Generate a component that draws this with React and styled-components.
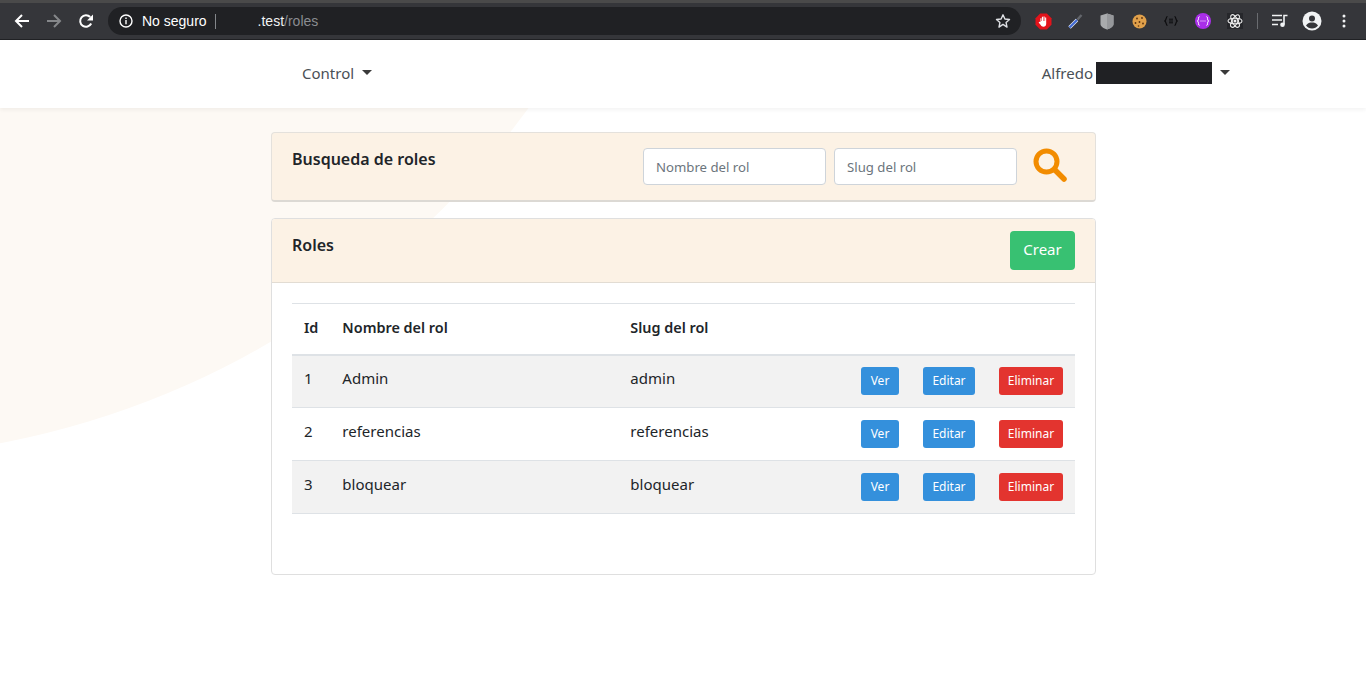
import React from "react";
import styled, { createGlobalStyle } from "styled-components";

const Global = createGlobalStyle`
  html, body { margin: 0; padding: 0; background: #fff; }
  body { font-family: "Noto Sans", "Open Sans", sans-serif; color: #212529; overflow: hidden; }
  * { box-sizing: border-box; }
`;

const roles = [
  { id: 1, name: "Admin", slug: "admin" },
  { id: 2, name: "referencias", slug: "referencias" },
  { id: 3, name: "bloquear", slug: "bloquear" },
];

function BackIcon({ color }) {
  return (
    <svg width="16" height="16" viewBox="0 0 16 16">
      <path d="M15 8H2M8 2L2 8l6 6" fill="none" stroke={color} strokeWidth="2" />
    </svg>
  );
}

function ForwardIcon({ color }) {
  return (
    <svg width="16" height="16" viewBox="0 0 16 16">
      <path d="M1 8h13M8 2l6 6-6 6" fill="none" stroke={color} strokeWidth="2" />
    </svg>
  );
}

function ReloadIcon() {
  return (
    <svg width="16" height="16" viewBox="0 0 16 16">
      <path d="M13.2 10.5A5.8 5.8 0 1 1 12.2 4" fill="none" stroke="#fff" strokeWidth="2" />
      <path d="M15 1.5V7.5H9z" fill="#fff" />
    </svg>
  );
}

function InfoIcon() {
  return (
    <svg width="14" height="14" viewBox="0 0 14 14">
      <circle cx="7" cy="7" r="6" fill="none" stroke="#fff" strokeWidth="1.4" />
      <path d="M6.3 6h1.4v4.3H6.3zM6.3 3.5h1.4v1.4H6.3z" fill="#fff" />
    </svg>
  );
}

function StarIcon() {
  return (
    <svg width="16" height="16" viewBox="0 0 16 16">
      <path d="M8 1.8l1.900 4.200 4.600.5-3.400 3.100.9 4.500L8 11.400l-4 2.700.9-4.500L1.500 6.500l4.600-.5z" fill="none" stroke="#dfe1e5" strokeWidth="1.4" strokeLinejoin="round" />
    </svg>
  );
}

function StopIcon() {
  return (
    <svg width="17" height="17" viewBox="0 0 17 17">
      <path d="M5.200.5h6.600l4.700 4.700v6.600l-4.700 4.700H5.200L.5 11.800V5.200z" fill="#e3131b" />
      <path d="M5.400 9V5.200h1V8h.5V3.700h1.100V8h.5V3.400h1.100V8h.5V4.500h1.100v6.300c0 1.800-1.100 2.900-2.800 2.900-1.300 0-2.100-.6-2.700-1.700L3.600 9.400l.9-.6z" fill="#fff" />
    </svg>
  );
}

function PipetteIcon() {
  return (
    <svg width="16" height="18" viewBox="0 0 16 18">
      <path d="M2.500 15.500L10 8" stroke="#e8ecf5" strokeWidth="3.400" />
      <path d="M2.500 15.500L10 8" stroke="#3f68d2" strokeWidth="2.200" />
      <path d="M10.500 7.500L14.500 3" stroke="#63666b" strokeWidth="2.400" />
    </svg>
  );
}

function ShieldIcon() {
  return (
    <svg width="14" height="17" viewBox="0 0 14 17">
      <path d="M7 .5L13.500 2.500V11c0 2.500-3 4.600-6.500 5.500C3.500 15.600.5 13.500.5 11V2.500z" fill="#a9abad" />
      <path d="M7 .5L13.500 2.500V11c0 2.500-3 4.600-6.500 5.500z" fill="#96989b" />
    </svg>
  );
}

function CookieIcon() {
  return (
    <svg width="15" height="15" viewBox="0 0 15 15">
      <circle cx="7.500" cy="7.500" r="7" fill="#e0a04a" />
      <circle cx="5" cy="4.500" r=".9" fill="#5a3210" />
      <circle cx="10" cy="4" r=".9" fill="#5a3210" />
      <circle cx="7.500" cy="8" r=".9" fill="#5a3210" />
      <circle cx="3.500" cy="9" r=".9" fill="#5a3210" />
      <circle cx="11" cy="9.500" r=".9" fill="#5a3210" />
      <circle cx="6.500" cy="12" r=".8" fill="#5a3210" />
    </svg>
  );
}

function VariableIcon() {
  return (
    <svg width="14" height="10" viewBox="0 0 14 10">
      <path d="M3.500.5C2 .5 2.500 4 .8 5c1.700 1 1.200 4.500 2.700 4.500M10.500.5C12 .5 11.500 4 13.200 5c-1.700 1-1.200 4.500-2.700 4.500" fill="none" stroke="#0c0c0e" strokeWidth="1.200" />
      <path d="M5 3.200h4M5 5h4M5 6.800h4" stroke="#0c0c0e" strokeWidth="1" />
    </svg>
  );
}

function PurpleIcon() {
  return (
    <svg width="16" height="16" viewBox="0 0 16 16">
      <circle cx="8" cy="8" r="8" fill="#a92ee8" />
      <path d="M4.500 3.500C3 3.500 4 7 2.500 8 4 9 3 12.500 4.500 12.500M11.500 3.500c1.500 0 .5 3.500 2 4.500-1.500 1-.5 4.500-2 4.500" fill="none" stroke="#fff" strokeWidth="1" />
      <path d="M5.500 8h1M7.500 8h1M9.500 8h1" stroke="#fff" strokeWidth="1" />
    </svg>
  );
}

function AtomIcon() {
  return (
    <svg width="16" height="16" viewBox="0 0 16 16">
      <rect width="16" height="16" fill="#26272b" />
      <circle cx="8" cy="8" r="1.500" fill="#ececec" />
      <g fill="none" stroke="#ececec" strokeWidth="1.100">
        <ellipse cx="8" cy="8" rx="7" ry="2.800" />
        <ellipse cx="8" cy="8" rx="7" ry="2.800" transform="rotate(60 8 8)" />
        <ellipse cx="8" cy="8" rx="7" ry="2.800" transform="rotate(120 8 8)" />
      </g>
    </svg>
  );
}

function QueueIcon() {
  return (
    <svg width="16" height="14" viewBox="0 0 16 14">
      <path d="M0 1.500h10M0 6h10M0 10.500h6" stroke="#f1f3f4" strokeWidth="1.600" />
      <path d="M12 10.500V1.500h3.500" fill="none" stroke="#f1f3f4" strokeWidth="1.600" />
      <circle cx="10.500" cy="10.800" r="2.300" fill="#f1f3f4" />
    </svg>
  );
}

function AccountIcon() {
  return (
    <svg width="20" height="20" viewBox="0 0 20 20">
      <circle cx="10" cy="10" r="9.500" fill="#f1f3f4" />
      <circle cx="10" cy="7.500" r="3" fill="#35363a" />
      <path d="M4 14.500c1.500-2.500 4-3 6-3s4.500.5 6 3c-1.500 2-3.500 3-6 3s-4.500-1-6-3z" fill="#35363a" />
    </svg>
  );
}

function MoreIcon() {
  return (
    <svg width="4" height="14" viewBox="0 0 4 14">
      <circle cx="2" cy="2" r="1.500" fill="#f1f3f4" />
      <circle cx="2" cy="7" r="1.500" fill="#f1f3f4" />
      <circle cx="2" cy="12" r="1.500" fill="#f1f3f4" />
    </svg>
  );
}

function SearchIcon() {
  return (
    <svg width="34" height="34" viewBox="0 0 34 34">
      <circle cx="13.500" cy="13.500" r="10.500" fill="none" stroke="#f28c00" strokeWidth="5" />
      <path d="M22 22l9 9" stroke="#f28c00" strokeWidth="5.500" strokeLinecap="round" />
    </svg>
  );
}

export default function App() {
  return (
    <Page>
      <Global />
      <Chrome>
        <NavButtons>
          <BackIcon color="#fff" />
          <ForwardIcon color="#85878a" />
          <ReloadIcon />
        </NavButtons>
        <Omnibox>
          <InfoIcon />
          <Insecure>No seguro</Insecure>
          <Divider />
          <Url>
            .test<span>/roles</span>
          </Url>
          <StarSlot>
            <StarIcon />
          </StarSlot>
        </Omnibox>
        <Extensions>
          <StopIcon />
          <PipetteIcon />
          <ShieldIcon />
          <CookieIcon />
          <VariableIcon />
          <PurpleIcon />
          <AtomIcon />
        </Extensions>
        <ChromeSep />
        <ChromeRight>
          <QueueIcon />
          <AccountIcon />
          <MoreIcon />
        </ChromeRight>
      </Chrome>
      <Viewport>
        <Blob />
        <Navbar>
          <NavLink>
            Control <Caret />
          </NavLink>
          <UserLink>
            Alfredo <Redacted /> <Caret />
          </UserLink>
        </Navbar>
        <Main>
          <SearchCard>
            <CardTitle>Busqueda de roles</CardTitle>
            <SearchForm>
              <Field placeholder="Nombre del rol" />
              <Field placeholder="Slug del rol" />
              <SearchButton aria-label="Buscar">
                <SearchIcon />
              </SearchButton>
            </SearchForm>
          </SearchCard>
          <Card>
            <CardHeader>
              <CardTitle>Roles</CardTitle>
              <CreateButton>Crear</CreateButton>
            </CardHeader>
            <CardBody>
              <Table>
                <thead>
                  <tr>
                    <Th $w="38px">Id</Th>
                    <Th $w="288px">Nombre del rol</Th>
                    <Th $w="190px">Slug del rol</Th>
                    <Th />
                  </tr>
                </thead>
                <tbody>
                  {roles.map((role) => (
                    <Row key={role.id}>
                      <Td>{role.id}</Td>
                      <Td>{role.name}</Td>
                      <Td>{role.slug}</Td>
                      <ActionsCell>
                        <Actions>
                          <ActionButton $bg="#3490dc" $w="38px">Ver</ActionButton>
                          <ActionButton $bg="#3490dc" $w="52px">Editar</ActionButton>
                          <ActionButton $bg="#e3342f" $w="64px">Eliminar</ActionButton>
                        </Actions>
                      </ActionsCell>
                    </Row>
                  ))}
                </tbody>
              </Table>
            </CardBody>
          </Card>
        </Main>
      </Viewport>
    </Page>
  );
}

const Page = styled.div`
  height: 697px;
  overflow: hidden;
  display: flex;
  flex-direction: column;
`;

const Chrome = styled.div`
  height: 40px;
  flex: none;
  background: #35363a;
  border-top: 3px solid #4a4a4a;
  border-bottom: 1px solid #202124;
  display: flex;
  align-items: center;
  padding: 0 6px 0 14px;
`;

const NavButtons = styled.div`
  display: flex;
  align-items: center;
  gap: 16px;
  margin-right: 14px;
`;

const Omnibox = styled.div`
  width: 913px;
  height: 28px;
  background: #202124;
  border-radius: 14px;
  display: flex;
  align-items: center;
  padding: 0 10px 0 11px;
  font-family: "Liberation Sans", Arial, sans-serif;
  font-size: 14px;
`;

const Insecure = styled.span`
  color: #fff;
  margin-left: 9px;
`;

const Divider = styled.span`
  width: 1px;
  height: 15px;
  background: #84878b;
  margin-left: 8px;
`;

const Url = styled.span`
  margin-left: 42px;
  color: #f1f3f4;
  span { color: #8a8d91; }
`;

const StarSlot = styled.span`
  margin-left: auto;
  display: flex;
`;

const Extensions = styled.div`
  display: grid;
  grid-template-columns: repeat(7, 32px);
  place-items: center;
  margin-left: 6px;
`;

const ChromeSep = styled.span`
  width: 1px;
  height: 16px;
  background: #6a6c70;
  margin-left: 6px;
`;

const ChromeRight = styled.div`
  display: grid;
  grid-template-columns: repeat(3, 32px);
  place-items: center;
  margin-left: 6px;
`;

const Viewport = styled.div`
  position: relative;
  flex: 1;
  background: #fff;
  overflow: hidden;
`;

const Blob = styled.div`
  position: absolute;
  width: 1695px;
  height: 1695px;
  left: -1005px;
  top: -1277px;
  border-radius: 50%;
  background: #fdf9f4;
`;

const Navbar = styled.nav`
  position: relative;
  height: 68px;
  background: #fff;
  box-shadow: 0 2px 4px rgba(0, 0, 0, 0.05);
  display: flex;
  align-items: center;
  justify-content: space-between;
  padding: 0 136px 2px 302px;
  font-size: 15px;
  color: #4a5056;
`;

const NavLink = styled.span`
  display: flex;
  align-items: center;
  gap: 8px;
`;

const UserLink = styled.span`
  display: flex;
  align-items: center;
  gap: 3px;
`;

const Redacted = styled.span`
  width: 116px;
  height: 22px;
  background: #202124;
  margin-right: 5px;
`;

const Caret = styled.span`
  display: inline-block;
  border-top: 5px solid #3a3a3a;
  border-left: 5px solid transparent;
  border-right: 5px solid transparent;
  margin-top: -2px;
`;

const Main = styled.main`
  position: relative;
  width: 825px;
  margin: 24px 0 0 271px;
  display: flex;
  flex-direction: column;
  gap: 16px;
`;

const SearchCard = styled.section`
  height: 70px;
  background: #fcf2e5;
  border: 1px solid #e4e1dc;
  border-bottom: 2px solid #dcd9d4;
  border-radius: 4px;
  display: flex;
  justify-content: space-between;
  padding: 15px 20px;
`;

const CardTitle = styled.h2`
  margin: 0;
  font-size: 16px;
  font-weight: 600;
  line-height: 22px;
  color: #212529;
`;

const SearchForm = styled.div`
  display: flex;
  align-items: flex-start;
  gap: 8px;
`;

const Field = styled.input`
  width: 183px;
  height: 37px;
  border: 1px solid #ced4da;
  border-radius: 4px;
  background: #fff;
  padding: 0 12px;
  font: 13.2px "Noto Sans", sans-serif;
  &::placeholder { color: #6c757d; opacity: 1; }
`;

const SearchButton = styled.button`
  border: 0;
  background: none;
  padding: 0;
  margin: 0 8px 0 8px;
  display: flex;
`;

const Card = styled.section`
  height: 357px;
  background: #fff;
  border: 1px solid #dfdfdf;
  border-radius: 4px;
  overflow: hidden;
`;

const CardHeader = styled.header`
  height: 64px;
  background: #fcf2e5;
  border-bottom: 1px solid #e2dcd3;
  display: flex;
  justify-content: space-between;
  padding: 15px 20px 0;
`;

const CreateButton = styled.button`
  width: 65px;
  height: 39px;
  margin-top: -3px;
  padding: 0 0 3px;
  border: 0;
  border-radius: 4px;
  background: #38c172;
  color: #fff;
  font: 15px "Noto Sans", sans-serif;
`;

const CardBody = styled.div`
  padding: 20px;
`;

const Table = styled.table`
  width: 100%;
  border-collapse: collapse;
  font-size: 15px;
  color: #212529;
`;

const Th = styled.th`
  width: ${(p) => p.$w || "auto"};
  height: 51px;
  padding: 0 12px 2px;
  text-align: left;
  font-size: 14.4px;
  font-weight: 600;
  border-top: 1px solid #dee2e6;
  border-bottom: 2px solid #dee2e6;
`;

const Row = styled.tr`
  height: 53px;
  border-bottom: 1px solid #dee2e6;
  &:nth-child(odd) { background: #f2f2f2; }
`;

const Td = styled.td`
  padding: 0 12px 6px;
`;

const ActionsCell = styled.td`
  padding: 0 12px;
`;

const Actions = styled.div`
  display: flex;
  justify-content: flex-end;
  gap: 24px;
`;

const ActionButton = styled.button`
  width: ${(p) => p.$w};
  height: 28px;
  border: 0;
  border-radius: 3px;
  padding: 0 0 2px;
  background: ${(p) => p.$bg};
  color: #fff;
  font: 12px "Noto Sans", sans-serif;
`;
